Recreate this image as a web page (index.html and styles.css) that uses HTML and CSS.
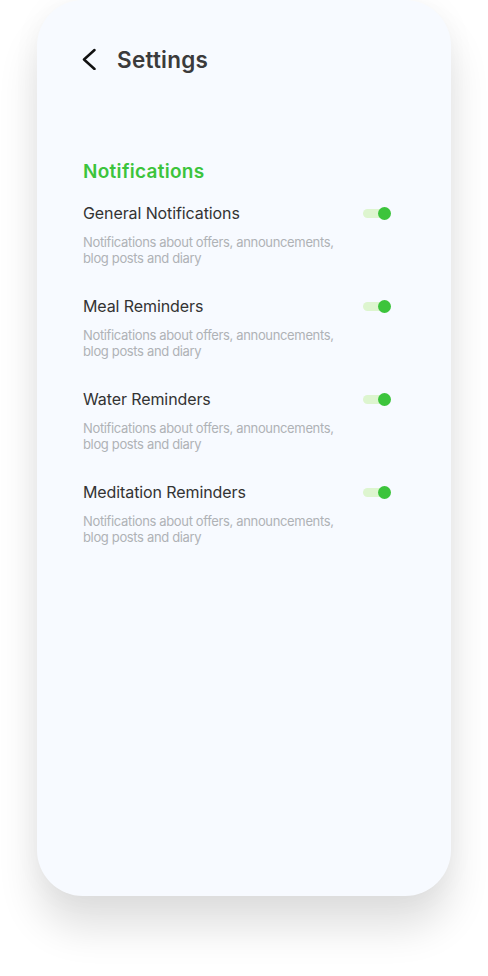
FILE: index.html
```html
<!DOCTYPE html>
<html>
<head>
<meta charset="utf-8">
<link rel="stylesheet" href="styles.css">
</head>
<body>
<div class="phone">
  <header class="header">
    <svg class="back" width="16" height="22" viewBox="0 0 16 22"><path d="M13.5 2 L3 11.5 L13.5 21" fill="none" stroke="#111" stroke-width="2.5" stroke-linecap="round" stroke-linejoin="round"/></svg>
    <h1 class="title">Settings</h1>
  </header>
  <section class="section">
    <h2 class="section-title">Notifications</h2>
    <div class="item">
      <div class="item-text">
        <div class="item-title">General Notifications</div>
        <div class="item-desc">Notifications about offers, announcements, blog posts and diary</div>
      </div>
      <span class="toggle"><span class="knob"></span></span>
    </div>
    <div class="item">
      <div class="item-text">
        <div class="item-title">Meal Reminders</div>
        <div class="item-desc">Notifications about offers, announcements, blog posts and diary</div>
      </div>
      <span class="toggle"><span class="knob"></span></span>
    </div>
    <div class="item">
      <div class="item-text">
        <div class="item-title">Water Reminders</div>
        <div class="item-desc">Notifications about offers, announcements, blog posts and diary</div>
      </div>
      <span class="toggle"><span class="knob"></span></span>
    </div>
    <div class="item">
      <div class="item-text">
        <div class="item-title">Meditation Reminders</div>
        <div class="item-desc">Notifications about offers, announcements, blog posts and diary</div>
      </div>
      <span class="toggle"><span class="knob"></span></span>
    </div>
  </section>
</div>
</body>
</html>
```
FILE: styles.css
```css
html, body {
  margin: 0;
  padding: 0;
  background: #ffffff;
}
body {
  font-family: Inter, "Noto Sans", sans-serif;
  width: 488px;
  height: 976px;
  overflow: hidden;
}
.phone {
  margin-left: 37px;
  width: 414px;
  height: 896px;
  background: #f7faff;
  border-radius: 46px;
  box-shadow: 0 32px 40px rgba(0, 0, 0, 0.12), 0 0 30px rgba(0, 0, 0, 0.04);
  box-sizing: border-box;
  padding: 0 61px 0 46px;
}
.header {
  display: flex;
  align-items: center;
  height: 118px;
}
.back {
  margin-left: -2px;
  margin-right: 20px;
}
.title {
  margin: 0;
  font-size: 22.5px;
  font-weight: 600;
  color: #3b3b3b;
  letter-spacing: 0.25px;
}
.section {
  padding-top: 41px;
}
.section-title {
  margin: 0 0 17px;
  font-size: 19px;
  font-weight: 600;
  color: #3cc43c;
  line-height: 26px;
  letter-spacing: 0.3px;
}
.item {
  display: flex;
  align-items: flex-start;
  justify-content: space-between;
  height: 93px;
}
.item-text {
  width: 260px;
}
.item-title {
  font-size: 16px;
  color: #333333;
  line-height: 22px;
  letter-spacing: -0.1px;
  margin-bottom: 10px;
}
.item-desc {
  font-size: 13px;
  line-height: 16px;
  color: #afb2b6;
  letter-spacing: -0.35px;
}
.toggle {
  position: relative;
  display: block;
  width: 27px;
  height: 9px;
  margin-top: 7px;
  border-radius: 5px;
  background: #ddf5cf;
}
.knob {
  position: absolute;
  right: -1px;
  top: -2px;
  width: 13px;
  height: 13px;
  border-radius: 50%;
  background: #3cc43c;
}
```
